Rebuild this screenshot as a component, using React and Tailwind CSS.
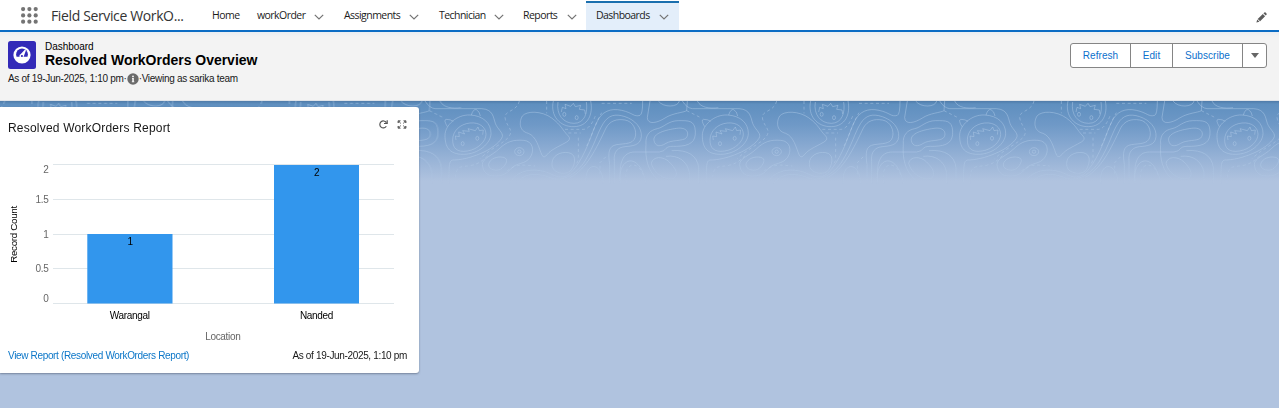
import React from "react";

const tabs = [
  { label: "workOrder", box: "w-[67px]" },
  { label: "Assignments", box: "ml-[20px] w-[75px]" },
  { label: "Technician", box: "ml-[20px] w-[65px]" },
  { label: "Reports", box: "ml-[19px] w-[54px]" },
];

const Chevron = () => (
  <svg className="mt-px h-[6px] w-[10px] shrink-0" viewBox="0 0 10 6" fill="none" stroke="#747474" strokeWidth="1.2">
    <path d="M0.8 0.8 L5 5 L9.2 0.8" />
  </svg>
);

function AppLauncher() {
  return (
    <svg className="ml-[21px] h-[17px] w-[17px] shrink-0" viewBox="0 0 17 17" fill="#747474">
      {[2.1, 8.4, 14.7].map((y) => [2.1, 8.4, 14.7].map((x) => <circle key={x + "-" + y} cx={x} cy={y} r="2.1" />))}
    </svg>
  );
}

function NavBar() {
  return (
    <nav className="flex h-[32px] items-stretch border-b-2 border-[#0b6cc4] bg-white font-['Open_Sans',sans-serif] text-[10.5px] tracking-[-0.55px] text-[#1b1b1b]">
      <div className="flex w-[202px] items-center pt-px">
        <AppLauncher />
        <span className="ml-[13px] whitespace-nowrap text-[14px] tracking-[-0.37px] text-[#333]">Field Service WorkO...</span>
      </div>
      <a className="flex w-[55px] items-center pt-[2px] pl-[10px]">Home</a>
      {tabs.map((t) => (
        <a key={t.label} className={"flex items-center justify-between pt-[2px] " + t.box}>
          {t.label}
          <Chevron />
        </a>
      ))}
      <a className="ml-[9px] mt-px flex w-[93px] items-center justify-between border-t-2 border-[#1a6fae] bg-[#e3eefa] pb-px pr-[10px] pl-[10px]">
        Dashboards
        <Chevron />
      </a>
      <div className="ml-auto flex items-center pr-[12px] pt-[4px]">
        <svg className="h-[11px] w-[11px]" viewBox="0 0 11 11" fill="#5c5c5c">
          <path d="M0.4 10.6 L1.2 7.5 L3.5 9.8 Z M1.7 6.9 L6.8 1.9 L9.1 4.2 L4.1 9.3 Z M7.4 1.3 L8.4 0.4 Q9 0 9.6 0.5 L10.5 1.4 Q11 2 10.5 2.7 L9.7 3.6 Z" />
        </svg>
      </div>
    </nav>
  );
}

function PageHeader() {
  return (
    <header className="flex h-[69px] justify-between border-b border-[#dfe3e8] bg-[#f3f3f3] bg-[linear-gradient(#e9edf2,#f3f3f3_5px)] pl-[8px] pr-[12px] text-black">
      <div className="pt-[9px]">
        <div className="flex">
          <svg className="h-[28px] w-[28px]" viewBox="0 0 28 28">
            <rect width="28" height="28" rx="2.5" fill="#332ab8" />
            <circle cx="14" cy="14" r="8.6" fill="#fff" />
            <circle cx="14" cy="13.400" r="5.900" fill="#332ab8" />
            <path d="M7.500 15.800 H20.500 L18.500 20 H9.500 Z" fill="#fff" />
            <path d="M16.800 8.800 L18 9.300 L15.800 15.300 A2.200 2.200 0 1 1 12.800 13 Z" fill="#fff" />
            <circle cx="13.900" cy="15" r="1.100" fill="#332ab8" />
          </svg>
          <div className="pl-[9px]">
            <div className="text-[10px] leading-[12px] tracking-[-0.05px]">Dashboard</div>
            <h1 className="text-[14px] leading-[15px] font-bold tracking-[-0.02px]">Resolved WorkOrders Overview</h1>
          </div>
        </div>
        <div className="mt-[4px] flex items-center text-[10px] leading-[12px] tracking-[-0.3px] whitespace-nowrap text-[#181818]">
          As of 19-Jun-2025, 1:10 pm·
          <svg className="h-[12px] w-[12px]" viewBox="0 0 12 12">
            <circle cx="6" cy="6" r="5.7" fill="#6b6b6b" />
            <path d="M5 5 H6.8 V8.4 H7.3 V9.2 H4.8 V8.4 H5.3 V5.8 H5 Z" fill="#fff" />
            <circle cx="6" cy="3.4" r="0.9" fill="#fff" />
          </svg>
          ·Viewing as sarika team
        </div>
      </div>
      <div className="mt-[11px] flex h-[25px] divide-x divide-[#858585] rounded-[3px] border border-[#858585] bg-white text-[10px] tracking-[0.05px] text-[#0b70cc]">
        <button className="w-[60px]">Refresh</button>
        <button className="w-[42px]">Edit</button>
        <button className="w-[70px]">Subscribe</button>
        <button className="flex w-[23px] items-center justify-center">
          <svg className="h-[5px] w-[8px]" viewBox="0 0 8 5" fill="#666"><path d="M0 0 H8 L4 5 Z" /></svg>
        </button>
      </div>
    </header>
  );
}

/* One repeat of the topographic backdrop; tiles every 772 units. */
function ContourTile() {
  return (
    <g id="contour">
      <path d="M45 15 Q58 36 75 38 H215 C250 40 250 65 256 82 S280 110 277 122 S250 155 222 168 S165 190 135 192 C115 190 118 205 116 262" />
      <path d="M105 118 C105 88 140 55 180 57 S243 82 243 112 S205 175 160 175 S105 150 105 118 Z" />
      <path d="M128 132 C128 105 150 84 180 81 S228 95 228 115 S205 160 172 165 S128 155 128 132 Z" />
      <path d="M112 92 Q100 72 108 70 Q122 70 130 76 M184 57 Q190 38 199 41 Q209 46 211 60" />
      <path d="M138 132 L136 120 L148 122 L146 108 L164 114 L158 104 L178 106 L174 98 L196 104 L204 93 L208 104 L220 102 L218 116" />
      <ellipse cx="158" cy="143" rx="4.500" ry="6" /><ellipse cx="202" cy="127" rx="4.500" ry="6" />
      <path d="M337 60 C350 44 395 44 425 66 S455 100 475 120 Q484 130 470 138 C440 155 425 160 412 175 Q403 188 396 178 C386 155 380 122 355 112 C325 105 328 75 337 60 Z" />
      <path d="M217 205 C217 187 245 180 268 158 S310 131 340 133 S374 165 360 185 S320 200 305 216 S282 240 255 240 S219 225 217 205 Z" />
      <path d="M236 204 C240 188 262 180 280 184 S288 206 276 217 S233 222 236 204 Z" />
      <ellipse cx="328" cy="167" rx="14" ry="12" /><circle cx="328" cy="167" r="5" />
      <path d="M426 202 C426 180 450 166 475 170 S495 200 488 215 S466 235 448 230 S426 215 426 202 Z" />
      <path d="M430 15 C420 60 450 93 492 92 S550 55 542 15 M444 18 C438 56 460 82 492 82 S534 50 529 18" />
      <path d="M454 48 L457 34 L468 38 L465 25 L482 31 L490 22 L496 32 L512 28 L508 40 L524 42 L526 54" />
      <ellipse cx="463" cy="55" rx="4.500" ry="6" /><ellipse cx="500" cy="65" rx="4.500" ry="6" />
      <path d="M298 262 C325 215 385 215 425 235 S482 235 505 202 C535 155 545 110 560 80 C575 45 602 36 635 43 S672 64 690 58 Q698 55 698 15" />
      <path d="M320 262 C340 230 385 230 420 245 S500 235 525 195 C555 145 562 110 580 82 C595 58 615 52 645 62 S696 95 694 122 S665 150 645 152 S610 165 613 196 V262" />
      <path d="M480 245 C530 220 560 155 588 96 C600 74 620 68 645 72 S682 105 675 125 S645 142 620 146 S594 170 599 206 V262" />
      <path d="M632 262 C625 200 638 168 675 168 H748 Q764 166 768 157 C775 150 785 151 800 151 C840 150 858 138 856 105 S835 74 805 74 S762 94 742 98 S705 115 708 145 C705 185 712 225 745 253" />
      <path d="M732 134 C728 112 765 102 800 97 S838 116 828 126 S785 131 768 142 S736 152 732 134 Z" />
      <path d="M724 202 C728 180 760 180 778 198 S806 234 794 245 S735 243 724 202 Z M768 181 C805 176 832 196 838 230 V262 M785 164 C835 160 862 180 866 215 V262" />
      <path d="M720 15 L712 64 C712 88 742 81 765 66 S820 50 830 44 L832 15 M745 15 C760 36 805 34 808 15 M862 15 C872 36 900 38 925 35" />
      <path d="M528 262 C522 195 578 195 580 262 M630 262 C622 180 690 165 708 262" />
      <g strokeDasharray="9 8">
        <path d="M328 15 C320 50 278 42 286 70 S310 100 298 120 S240 158 210 188 M410 15 V52 M135 262 C136 205 150 214 180 209 S220 190 235 178 M830 44 L874 66" />
        <path d="M290 225 C325 200 345 208 375 210 M465 100 H520 Q540 100 556 60 M475 111 H512 M505 125 V190 Q502 202 495 208 M530 150 C545 120 555 85 575 50 M575 22 H665 M570 235 V200 L590 180 M650 262 C635 195 690 190 702 245" />
      </g>
    </g>
  );
}

function Backdrop() {
  return (
    <svg className="absolute inset-x-0 top-0 h-[86px] w-full" viewBox="-1230 15 3837 258" preserveAspectRatio="none" fill="none" stroke="#bcd3ee" strokeOpacity="0.42" strokeWidth="3">
      <defs>
        <linearGradient id="fade" x1="0" y1="0" x2="0" y2="1">
          <stop offset="0" stopColor="#fff" /><stop offset="0.700" stopColor="#fff" stopOpacity="0.850" /><stop offset="1" stopColor="#fff" stopOpacity="0" />
        </linearGradient>
        <mask id="fadeMask" maskUnits="userSpaceOnUse" x="-1230" y="15" width="3837" height="258">
          <rect x="-1230" y="15" width="3837" height="258" fill="url(#fade)" stroke="none" />
        </mask>
      </defs>
      <g mask="url(#fadeMask)">
        <ContourTile />
        {[-3, -2, -1, 1, 2, 3].map((k) => <use key={k} href="#contour" x={k * 772} />)}
      </g>
    </svg>
  );
}

function BarChart() {
  return (
    <svg className="h-[204px] w-[419px] tracking-[-0.32px]" viewBox="0 143 419 204" fontFamily="'Liberation Sans', Arial, sans-serif" fontSize="10" textAnchor="middle">
      <g stroke="#dfe6ea" strokeWidth="1">
        {[164.5, 199.5, 234.5, 268.5, 303.5].map((y) => <path key={y} d={"M53 " + y + "H394"} />)}
      </g>
      <rect x="87.300" y="234" width="85.200" height="69.500" fill="#3296ed" />
      <rect x="274" y="165" width="85" height="138.500" fill="#3296ed" />
      <g fill="#666" textAnchor="end">
        <text x="48.500" y="173">2</text>
        <text x="48.500" y="202.500">1.5</text>
        <text x="48.500" y="238">1</text>
        <text x="48.500" y="272">0.5</text>
        <text x="48.500" y="301.500">0</text>
      </g>
      <text x="130" y="245">1</text>
      <text x="316.700" y="175.500">2</text>
      <text x="129.700" y="318.500">Warangal</text>
      <text x="316.500" y="318.500">Nanded</text>
      <text x="222.800" y="340.300" fill="#666">Location</text>
      <text transform="translate(16.8 234.500) rotate(-90)" fontSize="9.800">Record Count</text>
    </svg>
  );
}

function ReportCard() {
  return (
    <section className="relative flex h-[266px] w-[419px] flex-col rounded-r-[3px] bg-white shadow-[0_1px_2px_rgba(60,70,90,0.5)]">
      <div className="flex h-[36px] justify-between pr-[12px] pl-[8px]">
        <h2 className="pt-[13px] text-[12px] leading-[17px] tracking-[0.2px] text-[#181818]">Resolved WorkOrders Report</h2>
        <div className="flex gap-[9px] pt-[13px]">
          <svg className="h-[9px] w-[9px]" viewBox="0 0 9 9" fill="none" stroke="#555" strokeWidth="1.200">
            <path d="M7.300 6.300 A3.500 3.500 0 1 1 7.300 2.600 M8.200 0.300 V3.500 H5" />
          </svg>
          <svg className="h-[9px] w-[10px]" viewBox="0 0 10 9" fill="#666" stroke="#666" strokeWidth="0.900">
            <path d="M1 3 V0.800 H3.300 Z M6.700 0.800 H9 V3 Z M1 6 V8.200 H3.300 Z M6.700 8.200 H9 V6 Z M1.500 1.200 L4 3.600 M8.500 1.200 L6 3.600 M1.500 7.800 L4 5.400 M8.500 7.800 L6 5.400" />
          </svg>
        </div>
      </div>
      <BarChart />
      <div className="flex justify-between pr-[12px] pl-[8px] pt-[3px] text-[10px] leading-[12px] tracking-[-0.34px]">
        <a className="text-[#0b76c8]">View Report (Resolved WorkOrders Report)</a>
        <span className="text-[#181818]">As of 19-Jun-2025, 1:10 pm</span>
      </div>
    </section>
  );
}

export default function App() {
  return (
    <div className="flex h-[408px] w-[1279px] flex-col overflow-hidden bg-[#b0c3df] font-['Liberation_Sans',Arial,sans-serif]">
      <NavBar />
      <PageHeader />
      <main className="relative flex-1 bg-[linear-gradient(#4f7ba8,#5f8fbf_3px,#6f99c7_24px,#93b0d5_54px,#b0c3df_80px)] pt-[6px]">
        <Backdrop />
        <ReportCard />
      </main>
    </div>
  );
}
